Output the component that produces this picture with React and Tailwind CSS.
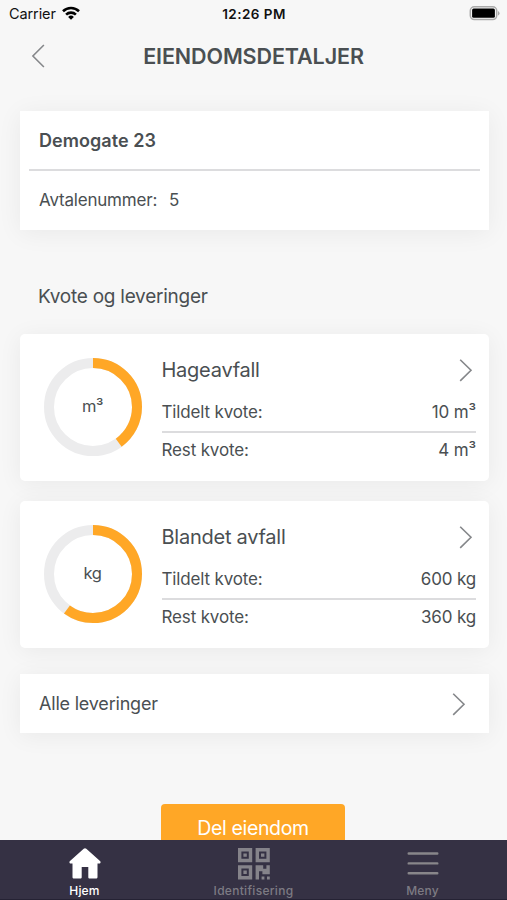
const quotas = [
  { name: 'Hageavfall', unit: 'm³', total: 10, rest: 4 },
  { name: 'Blandet avfall', unit: 'kg', total: 600, rest: 360 },
];

function Chevron({ className, left }) {
  return (
    <svg width="14" height="24" viewBox="0 0 14 24" fill="none" stroke="#85878a" strokeWidth="1.6" className={className}>
      <path d={left ? 'M12.9 1 1.9 12l11 11' : 'M1.2 1.7 12 12.3 1.2 22.9'} />
    </svg>
  );
}

function QuotaRing({ share, unit }) {
  const length = 2 * Math.PI * 44;
  return (
    <div className="grid size-[98px] shrink-0 place-items-center">
      <svg viewBox="0 0 98 98" className="col-start-1 row-start-1 size-[98px] -rotate-90" fill="none" strokeWidth="10">
        <circle cx="49" cy="49" r="44" stroke="#ececed" />
        <circle cx="49" cy="49" r="44" stroke="#ffa726" strokeDasharray={`${length * share} ${length}`} />
      </svg>
      <span className="col-start-1 row-start-1 text-[16.5px] tracking-[-0.3px]">{unit}</span>
    </div>
  );
}

function QuotaCard({ quota }) {
  return (
    <section className="flex h-[147.5px] rounded-[5px] bg-white pt-6 pr-[13px] pl-6 shadow-[0_3px_24px_rgba(0,0,0,0.06)]">
      <QuotaRing share={quota.rest / quota.total} unit={quota.unit} />
      <div className="ml-5 flex-1">
        <div className="flex h-6 items-center justify-between pr-[3px]">
          <h3 className="text-[20px] tracking-[-0.25px]">{quota.name}</h3>
          <Chevron />
        </div>
        <div className="mt-[13px] flex h-[38px] items-center justify-between border-b-2 border-[#dcdcde] text-[17px] tracking-[-0.15px]">
          <span>Tildelt kvote:</span>
          <span>{quota.total} {quota.unit}</span>
        </div>
        <div className="flex h-[36px] items-center justify-between text-[17px] tracking-[-0.15px]">
          <span>Rest kvote:</span>
          <span>{quota.rest} {quota.unit}</span>
        </div>
      </div>
    </section>
  );
}

function StatusBar() {
  return (
    <div className="grid h-7 grid-cols-3 items-center pr-[7px] pl-[9px] text-[13.5px] text-[#111]">
      <div className="flex items-center gap-1.5">
        <span className="text-[14.5px] tracking-[-0.1px]">Carrier</span>
        <svg width="18" height="14" viewBox="0 0 18 14" fill="none" stroke="#000" strokeWidth="2.6" className="-mt-0.5">
          <path d="M1 5.2a11.5 11.5 0 0 1 16 0" />
          <path d="M4.1 8.6a7 7 0 0 1 9.8 0" />
          <path d="M9 13.8 6.1 10.9a4.2 4.2 0 0 1 5.8 0Z" fill="#000" stroke="none" />
        </svg>
      </div>
      <span className="-ml-px text-center font-semibold tracking-[0.45px]">12:26 PM</span>
      <svg width="31" height="15" viewBox="0 0 31 15" className="-mt-0.5 justify-self-end">
        <rect x="1.3" y="0.8" width="26.4" height="12.8" rx="4" fill="#f7f7f7" stroke="#aaa" strokeWidth="1.5" />
        <rect x="3.1" y="2.6" width="22.8" height="9.2" rx="1.5" fill="#000" />
        <path d="M29 5a2.5 2.5 0 0 1 0 4.6Z" fill="#aaa" />
      </svg>
    </div>
  );
}

function QrIcon() {
  return (
    <svg width="32" height="32" viewBox="0 0 32 32" fill="#85838a">
      <g fill="none" stroke="#85838a" strokeWidth="3.4">
        <path d="M1.7 1.7h10.8v10.8H1.7zM19.3 1.7h10.8v10.8H19.3zM1.7 18.9h10.8v10.8H1.7z" />
      </g>
      <path d="M5.4 5.4h3.4v3.4H5.4zM23 5.4h3.4v3.4H23zM5.4 22.6h3.4V26H5.4z" />
      <path d="M17.6 17.2h7.6v3.6h3.2v-3.6h3.4v9h-7.4v-3H21v8.2h-3.4z" />
      <path d="M23.6 28.4h2.8v3h-2.8zM29 28.4h2.8v3H29z" />
    </svg>
  );
}

function TabBar() {
  return (
    <nav className="grid h-[60px] shrink-0 grid-cols-3 border-b border-[#252234] bg-[#353144] text-[12px] font-medium text-[#7d7b83]">
      <div className="flex flex-col items-center pt-2 text-white">
        <svg width="32" height="31" viewBox="0 0 32 31" fill="currentColor">
          <path d="M14.7.7a2 2 0 0 1 2.6 0L31 12.9c1.1 1.1.5 2.5-.8 2.5h-1.7V29c0 1-.6 1.6-1.6 1.6h-6.2c-.9 0-1.4-.5-1.4-1.4V19h-6.6v10.2c0 .9-.5 1.4-1.4 1.4H5.1c-1 0-1.6-.6-1.6-1.6V15.4H1.8C.5 15.4-.1 14 1 12.9Z" />
        </svg>
        <span className="mt-1 leading-4 tracking-[0.2px]">Hjem</span>
      </div>
      <div className="flex flex-col items-center pt-2">
        <QrIcon />
        <span className="mt-[3px] leading-4 tracking-[0.3px]">Identifisering</span>
      </div>
      <div className="flex flex-col items-center pt-[11px]">
        <svg width="32" height="25" viewBox="0 0 32 25" fill="none" stroke="#88868a" strokeWidth="2.4" strokeLinecap="round">
          <path d="M1.7 2.5h28.6M1.7 12.4h28.6M1.7 22.2h28.6" />
        </svg>
        <span className="mt-[7px] leading-4 tracking-[0.2px]">Meny</span>
      </div>
    </nav>
  );
}

export default function App() {
  return (
    <div className="flex h-[900px] w-[507px] flex-col overflow-hidden bg-[#f7f7f7] font-['Inter',sans-serif] text-[#4a4f52]">
      <StatusBar />
      <header className="grid h-14 shrink-0 grid-cols-[60px_1fr_60px] items-center">
        <Chevron left className="ml-[31px]" />
        <h1 className="text-center text-[21.5px] font-semibold tracking-[-0.1px]">EIENDOMSDETALJER</h1>
      </header>

      <main className="min-h-0 flex-1 overflow-hidden pt-[27px] pr-[18px] pl-[19.5px]">
        <section className="h-[118.5px] bg-white px-[9.5px] shadow-[0_3px_24px_rgba(0,0,0,0.06)]">
          <h2 className="flex h-[59.5px] items-center border-b-2 border-[#dcdcde] pt-0.5 pl-[10px] text-[18px] font-semibold tracking-[0.05px]">
            Demogate 23
          </h2>
          <p className="flex h-[59px] items-center gap-3 pt-px pl-[10px] text-[17px] tracking-[-0.2px]">
            <span>Avtalenummer:</span>
            <span>5</span>
          </p>
        </section>

        <h2 className="mt-[53px] mb-[23px] pl-[18.5px] text-[19px] leading-7 tracking-[-0.25px]">Kvote og leveringer</h2>

        <div className="flex flex-col gap-[19.5px]">
          {quotas.map(q => <QuotaCard key={q.name} quota={q} />)}
        </div>

        <div className="mt-[26px] flex h-[59px] items-center justify-between bg-white pr-[23px] pl-[19.5px] shadow-[0_3px_24px_rgba(0,0,0,0.06)]">
          <span className="text-[18px] tracking-[-0.2px]">Alle leveringer</span>
          <Chevron />
        </div>

        <button className="mt-[71px] ml-[141.5px] block h-[50px] w-[184px] rounded-[4px] bg-[#ffa726] text-[19.5px] tracking-[-0.35px] text-white">
          Del eiendom
        </button>
      </main>

      <TabBar />
    </div>
  );
}
